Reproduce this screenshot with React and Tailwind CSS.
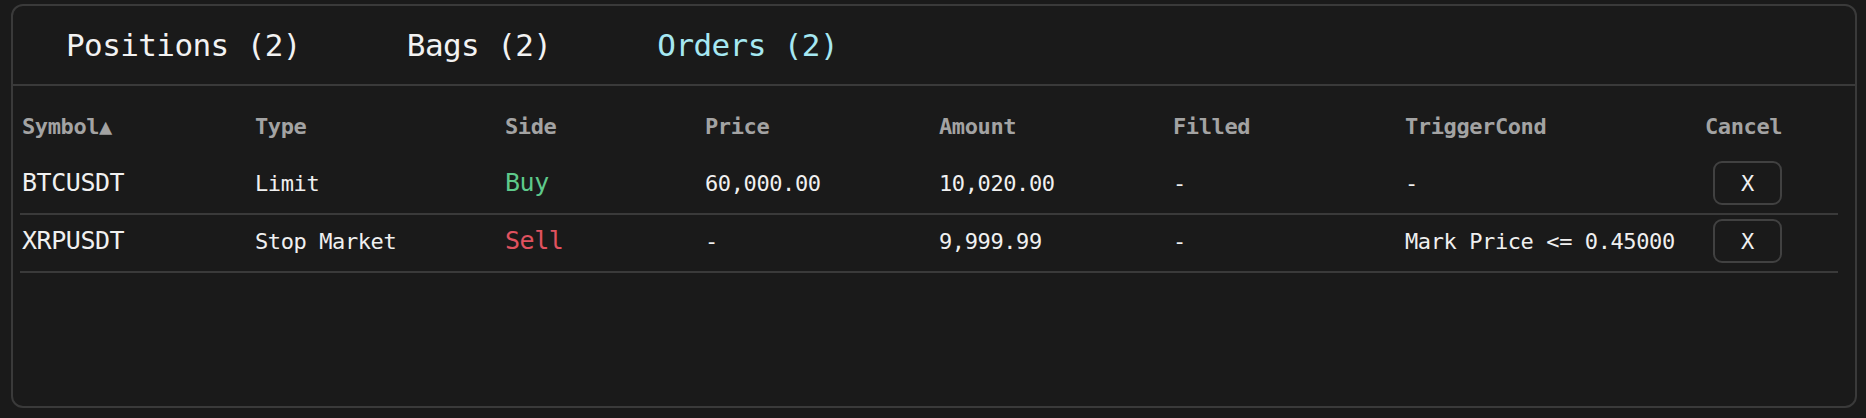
import React from "react";

const cols = "grid grid-cols-[233px_250px_200px_234px_234px_232px_300px_135px] items-center";

const rows = [
  { sym: "BTCUSDT", type: "Limit", side: "Buy", price: "60,000.00", amount: "10,020.00", filled: "-", trig: "-" },
  { sym: "XRPUSDT", type: "Stop Market", side: "Sell", price: "-", amount: "9,999.99", filled: "-", trig: "Mark Price <= 0.45000" },
];

export default function App() {
  return (
    <div
      className="min-h-screen bg-[#1a1a1a] pt-[4px] pl-[11px] pr-[9px]"
      style={{ fontFamily: "'DejaVu Sans Mono', monospace" }}
    >
      <div className="h-[404px] rounded-[12px] border-2 border-[#3a3a3a] bg-[#1a1a1a] flex flex-col">
        <div className="h-[80px] flex items-center border-b-2 border-[#3a3a3a]">
          <button className="px-[53px] text-[31px] tracking-[-0.6px] text-[#f2f2f2] leading-none">Positions (2)</button>
          <button className="px-[53px] text-[31px] tracking-[-0.6px] text-[#f2f2f2] leading-none">Bags (2)</button>
          <button className="px-[53px] text-[31px] tracking-[-0.6px] text-[#a6e8f2] leading-none">Orders (2)</button>
        </div>
        <div className="pt-[12px] pl-[7px] pr-[17px]">
          <div className={`${cols} pt-[6px] pb-[9px] text-[22px] tracking-[-0.4px] font-bold text-[#a3a3a3]`}>
            <div className="pl-[2px] h-[44px] flex items-center">Symbol▲</div>
            <div className="pl-[2px]">Type</div>
            <div className="pl-[2px]">Side</div>
            <div className="pl-[2px]">Price</div>
            <div className="pl-[2px]">Amount</div>
            <div className="pl-[2px]">Filled</div>
            <div className="pl-[2px]">TriggerCond</div>
            <div className="pl-[2px]">Cancel</div>
          </div>
          {rows.map((r) => (
            <div
              key={r.sym}
              className={`${cols} pt-[4px] pb-[8px] border-b-2 border-[#3a3a3a] text-[22px] tracking-[-0.4px] text-[#f0f0f0]`}
            >
              <div className="pl-[2px] text-[25px] tracking-[-0.45px]">{r.sym}</div>
              <div className="pl-[2px]">{r.type}</div>
              <div
                className={`pl-[2px] text-[25px] tracking-[-0.45px] ${r.side === "Buy" ? "text-[#5ec98b]" : "text-[#e0525f]"}`}
              >
                {r.side}
              </div>
              <div className="pl-[2px]">{r.price}</div>
              <div className="pl-[2px]">{r.amount}</div>
              <div className="pl-[2px]">{r.filled}</div>
              <div className="pl-[2px]">{r.trig}</div>
              <div>
                <button className="ml-[10px] w-[69px] h-[44px] rounded-[9px] border-2 border-[#414141] flex items-center justify-center text-[22px] text-[#f0f0f0]">
                  X
                </button>
              </div>
            </div>
          ))}
        </div>
      </div>
    </div>
  );
}
